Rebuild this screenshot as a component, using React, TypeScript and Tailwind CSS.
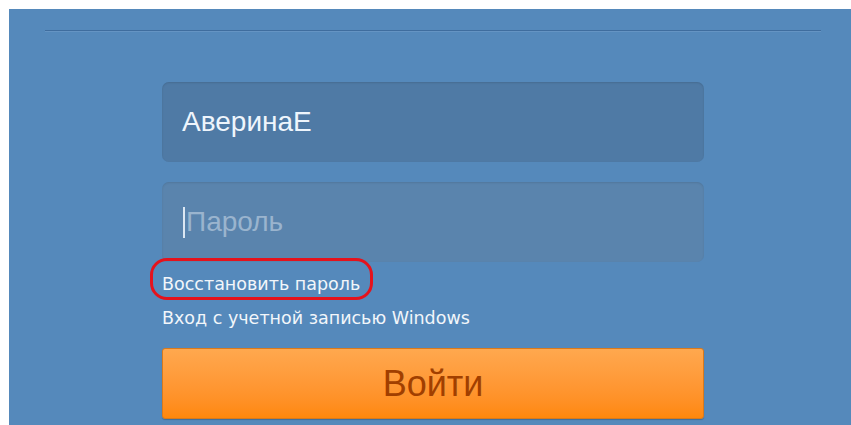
import React from "react"

const font = { fontFamily: '"Liberation Sans", Arial, sans-serif' }
const linkFont = { fontFamily: '"DejaVu Sans", Verdana, sans-serif' }

export default function App() {
  return (
    <div className="w-full h-[425px] bg-white pt-[9px] pl-[9px] overflow-hidden" style={font}>
      <div className="h-full bg-[#5589bb] pt-[21px]">
        {/* header divider */}
        <div className="ml-[36px] mr-[30px] h-px bg-[#3f6d9e] border-b border-[#6594c3] box-content" />

        <div className="ml-[153px] w-[542px] mt-[50px] flex flex-col">
          {/* login field */}
          <div className="h-[80px] rounded-[7px] bg-[#4f7aa5] shadow-[inset_0_1px_2px_rgba(0,0,0,0.12)] flex items-center pl-[20px]">
            <span className="text-[28px] text-[#eef5fc] leading-none">АверинаЕ</span>
          </div>

          {/* password field */}
          <div className="mt-[20px] h-[80px] rounded-[7px] bg-[#5a84ad] shadow-[inset_0_1px_2px_rgba(0,0,0,0.1)] flex items-center pl-[21px]">
            <span className="w-[2px] h-[31px] bg-[#dbe7f3] mr-[1px]" />
            <span className="text-[28px] text-[#9ab4ce] leading-none">Пароль</span>
          </div>

          {/* links */}
          <div className="mt-[12px] relative self-start" style={linkFont}>
            <a className="block text-[17.5px] leading-[20px] text-[#f2f6fa]">Восстановить пароль</a>
            <div className="absolute -left-[12px] -top-[16px] w-[223px] h-[42px] border-[3px] border-[#e5121c] rounded-[17px]" />
          </div>
          <a className="mt-[14px] block text-[17.5px] leading-[20px] text-[#f2f6fa]" style={linkFont}>
            Вход с учетной записью Windows
          </a>

          {/* submit */}
          <button className="mt-[20px] h-[71px] rounded-[3px] border border-[#d97a1c] bg-gradient-to-b from-[#ffa84e] to-[#ff880a] shadow-[0_1px_1px_rgba(0,0,0,0.2)] text-[36px] text-[#a13f00] leading-none">
            Войти
          </button>
        </div>
      </div>
    </div>
  )
}
